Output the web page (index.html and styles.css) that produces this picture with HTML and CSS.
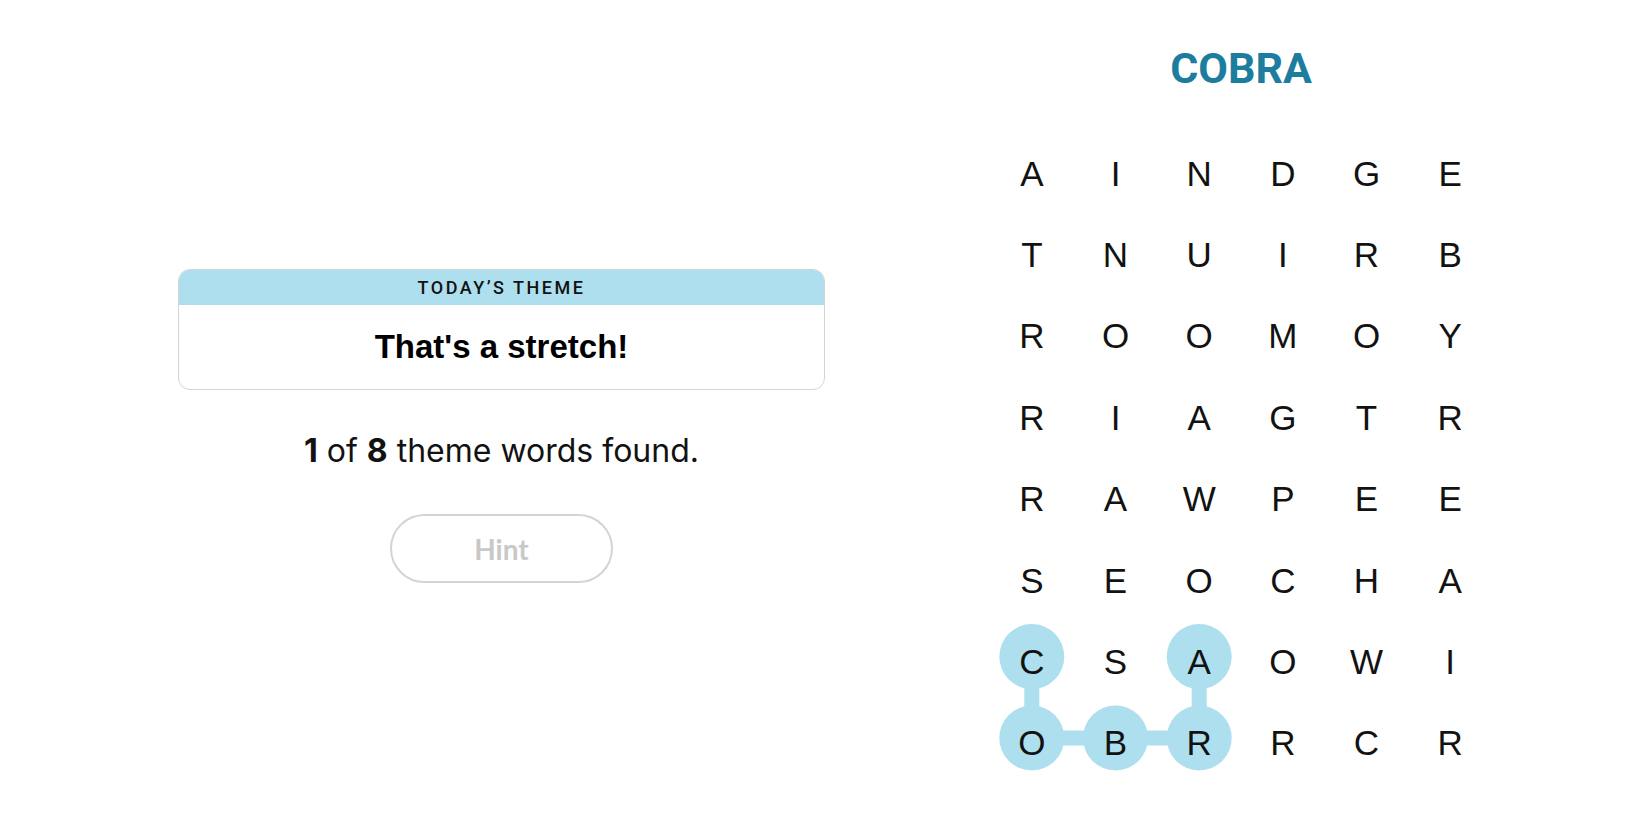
FILE: index.html
```html
<!DOCTYPE html>
<html lang="en">
<head>
<meta charset="utf-8">
<title>Strands</title>
<link rel="stylesheet" href="styles.css">
</head>
<body>
<main class="page">
  <section class="left">
    <div class="theme-card">
      <div class="theme-head">TODAY’S THEME</div>
      <div class="theme-body">That's a stretch!</div>
    </div>
    <p class="progress"><b>1</b> of <b>8</b> theme words found.</p>
    <button class="hint" type="button">Hint</button>
  </section>
  <section class="right">
    <h1 class="word">COBRA</h1>
    <div class="board">
      <svg class="path" viewBox="0 0 502 651" width="502" height="651" aria-hidden="true">
        <g stroke="#aedfee" stroke-width="15" fill="none">
          <line x1="41.8" y1="523.6" x2="41.8" y2="605"/>
          <line x1="41.8" y1="605" x2="209.2" y2="605"/>
          <line x1="209.2" y1="605" x2="209.2" y2="523.6"/>
        </g>
        <g fill="#aedfee">
          <circle cx="41.8" cy="523.6" r="32.5"/>
          <circle cx="41.8" cy="605" r="32.5"/>
          <circle cx="125.5" cy="605" r="32.5"/>
          <circle cx="209.2" cy="605" r="32.5"/>
          <circle cx="209.2" cy="523.6" r="32.5"/>
        </g>
      </svg>
      <span class="cell">A</span><span class="cell">I</span><span class="cell">N</span><span class="cell">D</span><span class="cell">G</span><span class="cell">E</span>
      <span class="cell">T</span><span class="cell">N</span><span class="cell">U</span><span class="cell">I</span><span class="cell">R</span><span class="cell">B</span>
      <span class="cell">R</span><span class="cell">O</span><span class="cell">O</span><span class="cell">M</span><span class="cell">O</span><span class="cell">Y</span>
      <span class="cell">R</span><span class="cell">I</span><span class="cell">A</span><span class="cell">G</span><span class="cell">T</span><span class="cell">R</span>
      <span class="cell">R</span><span class="cell">A</span><span class="cell">W</span><span class="cell">P</span><span class="cell">E</span><span class="cell">E</span>
      <span class="cell">S</span><span class="cell">E</span><span class="cell">O</span><span class="cell">C</span><span class="cell">H</span><span class="cell">A</span>
      <span class="cell">C</span><span class="cell">S</span><span class="cell">A</span><span class="cell">O</span><span class="cell">W</span><span class="cell">I</span>
      <span class="cell">O</span><span class="cell">B</span><span class="cell">R</span><span class="cell">R</span><span class="cell">C</span><span class="cell">R</span>
    </div>
  </section>
</main>
</body>
</html>
```

FILE: styles.css
```css
html, body {
  margin: 0;
  padding: 0;
  background: #ffffff;
  color: #121212;
  font-family: "Liberation Sans", Arial, sans-serif;
}

.page {
  display: flex;
  align-items: flex-start;
  width: 1650px;
  height: 825px;
  overflow: hidden;
}

.left {
  width: 647px;
  margin-left: 178px;
  padding-top: 269px;
  display: flex;
  flex-direction: column;
  align-items: center;
}

.theme-card {
  width: 100%;
  box-sizing: border-box;
  border: 1.5px solid #d4d4d4;
  border-radius: 12px;
  overflow: hidden;
}

.theme-head {
  height: 35px;
  background: #aedfee;
  display: flex;
  align-items: center;
  justify-content: center;
  font-family: Roboto, "Liberation Sans", sans-serif;
  font-size: 18px;
  font-weight: 500;
  letter-spacing: 2.5px;
  color: #121212;
}

.theme-body {
  height: 84px;
  display: flex;
  align-items: center;
  justify-content: center;
  font-size: 33px;
  font-weight: 700;
  color: #000000;
}

.progress {
  margin: 42px 0 0;
  font-family: Inter, "Liberation Sans", sans-serif;
  font-size: 32px;
  line-height: 38px;
  color: #121212;
}

.progress b {
  font-weight: 700;
}

.hint {
  margin-top: 44px;
  width: 223px;
  height: 69px;
  box-sizing: border-box;
  border: 2px solid #d4d4d4;
  border-radius: 35px;
  background: #ffffff;
  font-family: Lato, "Liberation Sans", sans-serif;
  font-size: 28px;
  font-weight: 700;
  color: #c8c8c8;
  padding: 0;
}

.right {
  width: 502px;
  margin-left: 165px;
  padding-top: 44px;
  display: flex;
  flex-direction: column;
  align-items: center;
}

.word {
  margin: 0;
  font-family: Roboto, "Liberation Sans", sans-serif;
  font-size: 43px;
  line-height: 48px;
  font-weight: 700;
  color: #1d7d9e;
}

.board {
  position: relative;
  margin-top: 41px;
  width: 502px;
  display: grid;
  grid-template-columns: repeat(6, 1fr);
  grid-template-rows: repeat(8, 81.4px);
}

.path {
  position: absolute;
  left: 0;
  top: 0;
  z-index: 0;
}

.cell {
  position: relative;
  z-index: 1;
  display: flex;
  align-items: center;
  justify-content: center;
  font-size: 35px;
  color: #121212;
}
```
